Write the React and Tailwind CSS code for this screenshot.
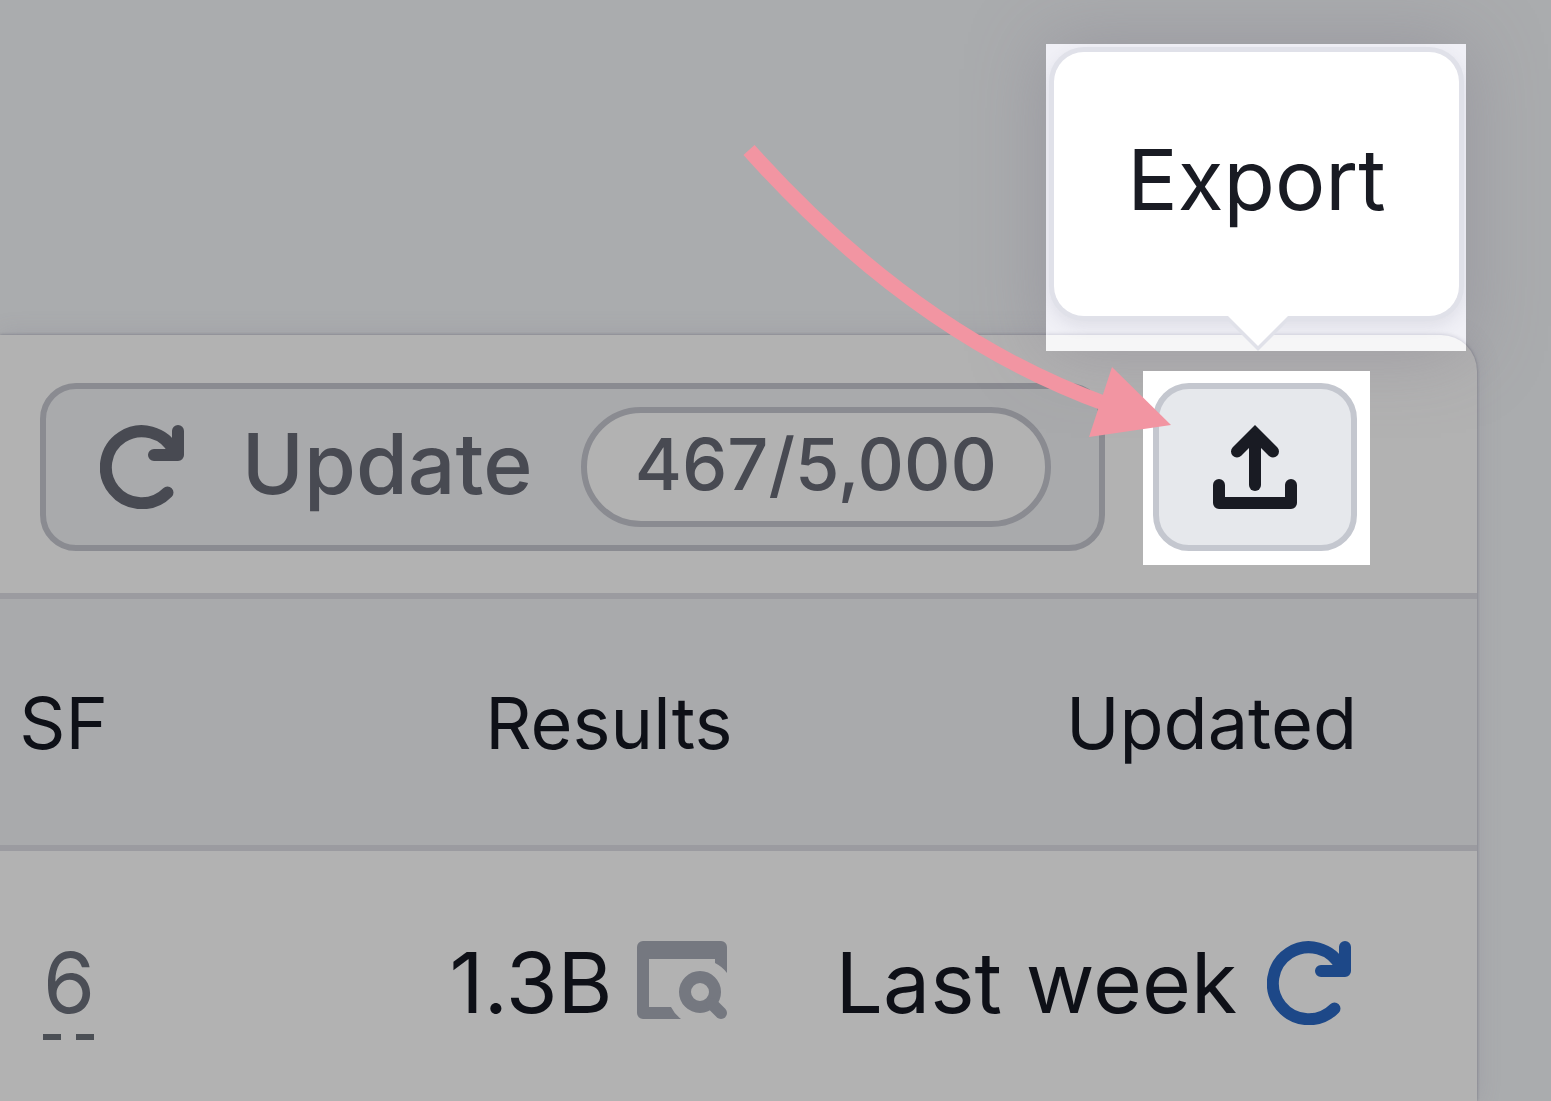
import React from 'react';

const rows = [{ sf: '6', results: '1.3B', updated: 'Last week' }];

const RefreshIcon = ({ className }) => (
  <svg
    viewBox="0 0 84 84"
    className={`h-[84px] w-[84px] shrink-0 ${className}`}
    fill="none"
    stroke="currentColor"
    strokeWidth="12"
    strokeLinecap="round"
    strokeLinejoin="round"
    aria-hidden="true"
  >
    <path d="M67.5 67.5A36 36 0 1 1 74 26" />
    <path d="M78 6V30H54" />
  </svg>
);

const UploadIcon = () => (
  <svg
    viewBox="0 0 84 84"
    className="h-[84px] w-[84px]"
    fill="none"
    stroke="currentColor"
    strokeWidth="12"
    strokeLinecap="round"
    aria-hidden="true"
  >
    <path d="M6 60V78H78V60" strokeLinejoin="round" />
    <path d="M24 26.5L42 8.5L60 26.5" />
    <path d="M42 12V60" />
  </svg>
);

const SerpIcon = () => (
  <svg viewBox="0 0 90 84" className="block h-[84px] w-[90px]" aria-hidden="true">
    <path
      fill="currentColor"
      d="M6 0H84a6 6 0 0 1 6 6V32A33 33 0 0 0 78 22V18H12V66H34A33 33 0 0 0 44 78H6a6 6 0 0 1-6-6V6a6 6 0 0 1 6-6z"
    />
    <circle cx="63" cy="51" r="15" fill="none" stroke="currentColor" strokeWidth="12" />
    <path d="M75 63L84 72" stroke="currentColor" strokeWidth="12" strokeLinecap="round" />
  </svg>
);

const Tooltip = () => (
  <div
    role="tooltip"
    className="absolute -right-24 bottom-full mb-5 h-[307px] w-[420px] overflow-hidden bg-[#f0f0f6] shadow-[0_0_72px_rgba(120,110,130,0.36)]"
  >
    <div className="absolute top-[291px] -right-[11px] h-12 w-[431px] rounded-tr-[36px] bg-[#f6f6f7] shadow-[0_0_4px_rgba(90,90,120,0.3)]" />
    <div className="relative mx-2 mt-2 mr-[7px] flex h-[264px] items-center justify-center rounded-[30px] bg-white pb-2 text-[84px] text-[#191b23] shadow-[0_0_0_5px_#e0e1e9,0_6px_16px_4px_rgba(90,90,120,0.12)]">
      Export
    </div>
    <svg viewBox="0 0 72 36" className="absolute top-[271px] left-44 h-9 w-[72px]" aria-hidden="true">
      <path d="M1 1L36 36L71 1" fill="#e0e1e9" />
      <path d="M6 0V1L36 31L66 1V0z" fill="#fff" />
    </svg>
  </div>
);

const PointerArrow = () => (
  <svg
    viewBox="0 0 435 300"
    className="pointer-events-none absolute right-[195px] bottom-[125px] z-20 h-[300px] w-[435px]"
    aria-hidden="true"
  >
    <path d="M9 10Q175 195 366 264" fill="none" stroke="#f295a2" strokeWidth="15" />
    <path d="M372 227L431 285L349 297z" fill="#f295a2" />
  </svg>
);

const App = () => {
  return (
    <div className="min-h-screen overflow-hidden bg-[#aaacae] pt-[335px] font-['Inter',sans-serif] [font-optical-sizing:none]">
      <main className="mr-[74px] rounded-tr-[36px] bg-[#b2b2b2] shadow-[0_0_3px_rgba(70,70,90,0.5),0_0_24px_rgba(110,105,130,0.2)]">
        <div className="flex items-start justify-end gap-[38px] border-b-6 border-[#9b9ba0] pt-9 pr-[107px] pb-7">
          <button
            type="button"
            className="mt-3 flex h-[168px] shrink-0 items-center rounded-[36px] border-6 border-[#8a8b91] bg-[#a9aaac] pr-12 pl-[54px] text-[84px] font-medium text-[#484a52]"
          >
            <RefreshIcon className="mr-[58px]" />
            <span className="pb-1.5">Update</span>
            <span className="ml-12 flex h-[120px] items-center rounded-full border-6 border-[#8a8b91] bg-[#b2b2b2] px-12 pb-1.5 text-[72px]">
              467/5,000
            </span>
          </button>

          <div className="relative shrink-0">
            <Tooltip />
            <div className="relative z-10 bg-white pt-3 pr-[13px] pb-[14px] pl-[10px]">
              <button
                type="button"
                aria-label="Export"
                className="flex h-[168px] w-[204px] items-center justify-center rounded-[36px] border-6 border-[#c4c7cf] bg-[#e6e8ec] text-[#191b23]"
              >
                <UploadIcon />
              </button>
            </div>
            <PointerArrow />
          </div>
        </div>

        <table className="w-full table-fixed border-separate border-spacing-0 text-right text-[#0e1017]">
          <thead>
            <tr className="h-[252px] bg-[#a9aaac] text-[72px]">
              <th className="w-[108px] border-b-6 border-[#9b9ba0] pt-0.5 font-normal">SF</th>
              <th className="border-b-6 border-[#9b9ba0] pt-0.5 pr-[60px] font-normal">Results</th>
              <th className="border-b-6 border-[#9b9ba0] pt-0.5 pr-[120px] font-normal">Updated</th>
            </tr>
          </thead>
          <tbody>
            {rows.map((row) => (
              <tr key={row.results} className="align-top text-[84px] leading-[120px]">
                <td className="pt-[72px] pr-[14px] pb-[58px]">
                  <a
                    href="#serp-features"
                    className="inline-block h-[117px] w-[51px] bg-[repeating-linear-gradient(90deg,#4b4f55_0_18px,transparent_18px_33px)] bg-[length:100%_6px] bg-bottom bg-no-repeat text-center text-[#4b4e56]"
                  >
                    {row.sf}
                  </a>
                </td>
                <td className="pt-[72px] pr-[66px] pb-[58px]">
                  <div className="flex items-center justify-end gap-6">
                    {row.results}
                    <button type="button" aria-label="View results page" className="text-[#757880]">
                      <SerpIcon />
                    </button>
                  </div>
                </td>
                <td className="pt-[72px] pr-[126px] pb-[58px]">
                  <div className="flex items-center justify-end gap-[30px] whitespace-nowrap">
                    {row.updated}
                    <button type="button" aria-label="Refresh" className="text-[#1d4888]">
                      <RefreshIcon className="block" />
                    </button>
                  </div>
                </td>
              </tr>
            ))}
          </tbody>
        </table>
      </main>
    </div>
  );
};

export default App;
